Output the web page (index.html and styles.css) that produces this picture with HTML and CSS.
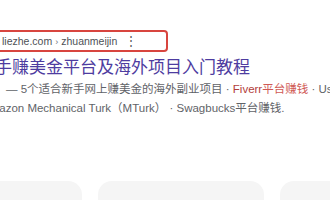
FILE: index.html
```html
<!DOCTYPE html>
<html lang="zh">
<head>
<meta charset="utf-8">
<link rel="stylesheet" href="styles.css">
</head>
<body>
<div class="page">
  <div class="result">
    <div class="cite-box">
      <span class="cite">liezhe.com<span class="sep">›</span>zhuanmeijin</span>
      <span class="more">⋮</span>
    </div>
    <div class="title">新手赚美金平台及海外项目入门教程</div>
    <div class="snippet s1">— 5个适合新手网上赚美金的海外副业项目 · <span class="em1">Fiverr</span><span class="em2">平台赚钱</span> · Usa</div>
    <div class="snippet s2">Amazon Mechanical Turk（MTurk） · Swagbucks平台赚钱.</div>
  </div>
  <div class="cards">
    <div class="card"></div>
    <div class="card"></div>
    <div class="card"></div>
  </div>
</div>
</body>
</html>
```

FILE: styles.css
```css
html, body {
  margin: 0;
  padding: 0;
  background: #ffffff;
  overflow: hidden;
  width: 330px;
  height: 200px;
}
.page {
  font-family: "Liberation Sans", Arial, "Noto Sans CJK SC", sans-serif;
  width: 330px;
  height: 200px;
  overflow: hidden;
  position: relative;
}
.result {
  padding-top: 30px;
}
.cite-box {
  display: flex;
  align-items: center;
  margin-left: -10px;
  width: 178px;
  height: 22px;
  box-sizing: border-box;
  border: 2px solid #d8453f;
  border-radius: 4px;
  padding-left: 10px;
  color: #4d5156;
  font-size: 10.5px;
  white-space: nowrap;
}
.sep {
  margin: 0 3px;
  font-size: 9px;
  color: #70757a;
}
.more {
  margin-left: 8px;
  font-size: 12px;
  color: #555;
}
.title {
  margin-top: 4px;
  font-size: 17px;
  line-height: 24px;
  color: #4e3ca0;
  white-space: nowrap;
  text-indent: -22px;
}
.snippet {
  font-size: 11.5px;
  line-height: 19px;
  color: #5f6368;
  white-space: nowrap;
}
.s1 {
  padding-left: 6px;
}
.s2 {
  text-indent: -18px;
}
.em1 {
  color: #b3403b;
}
.em2 {
  color: #d05a55;
}
.cards {
  display: flex;
  gap: 16px;
  margin-top: 63px;
  margin-left: -84px;
}
.card {
  flex: none;
  width: 166px;
  height: 60px;
  background: #f5f5f5;
  border-radius: 14px 14px 0 0;
}
```
